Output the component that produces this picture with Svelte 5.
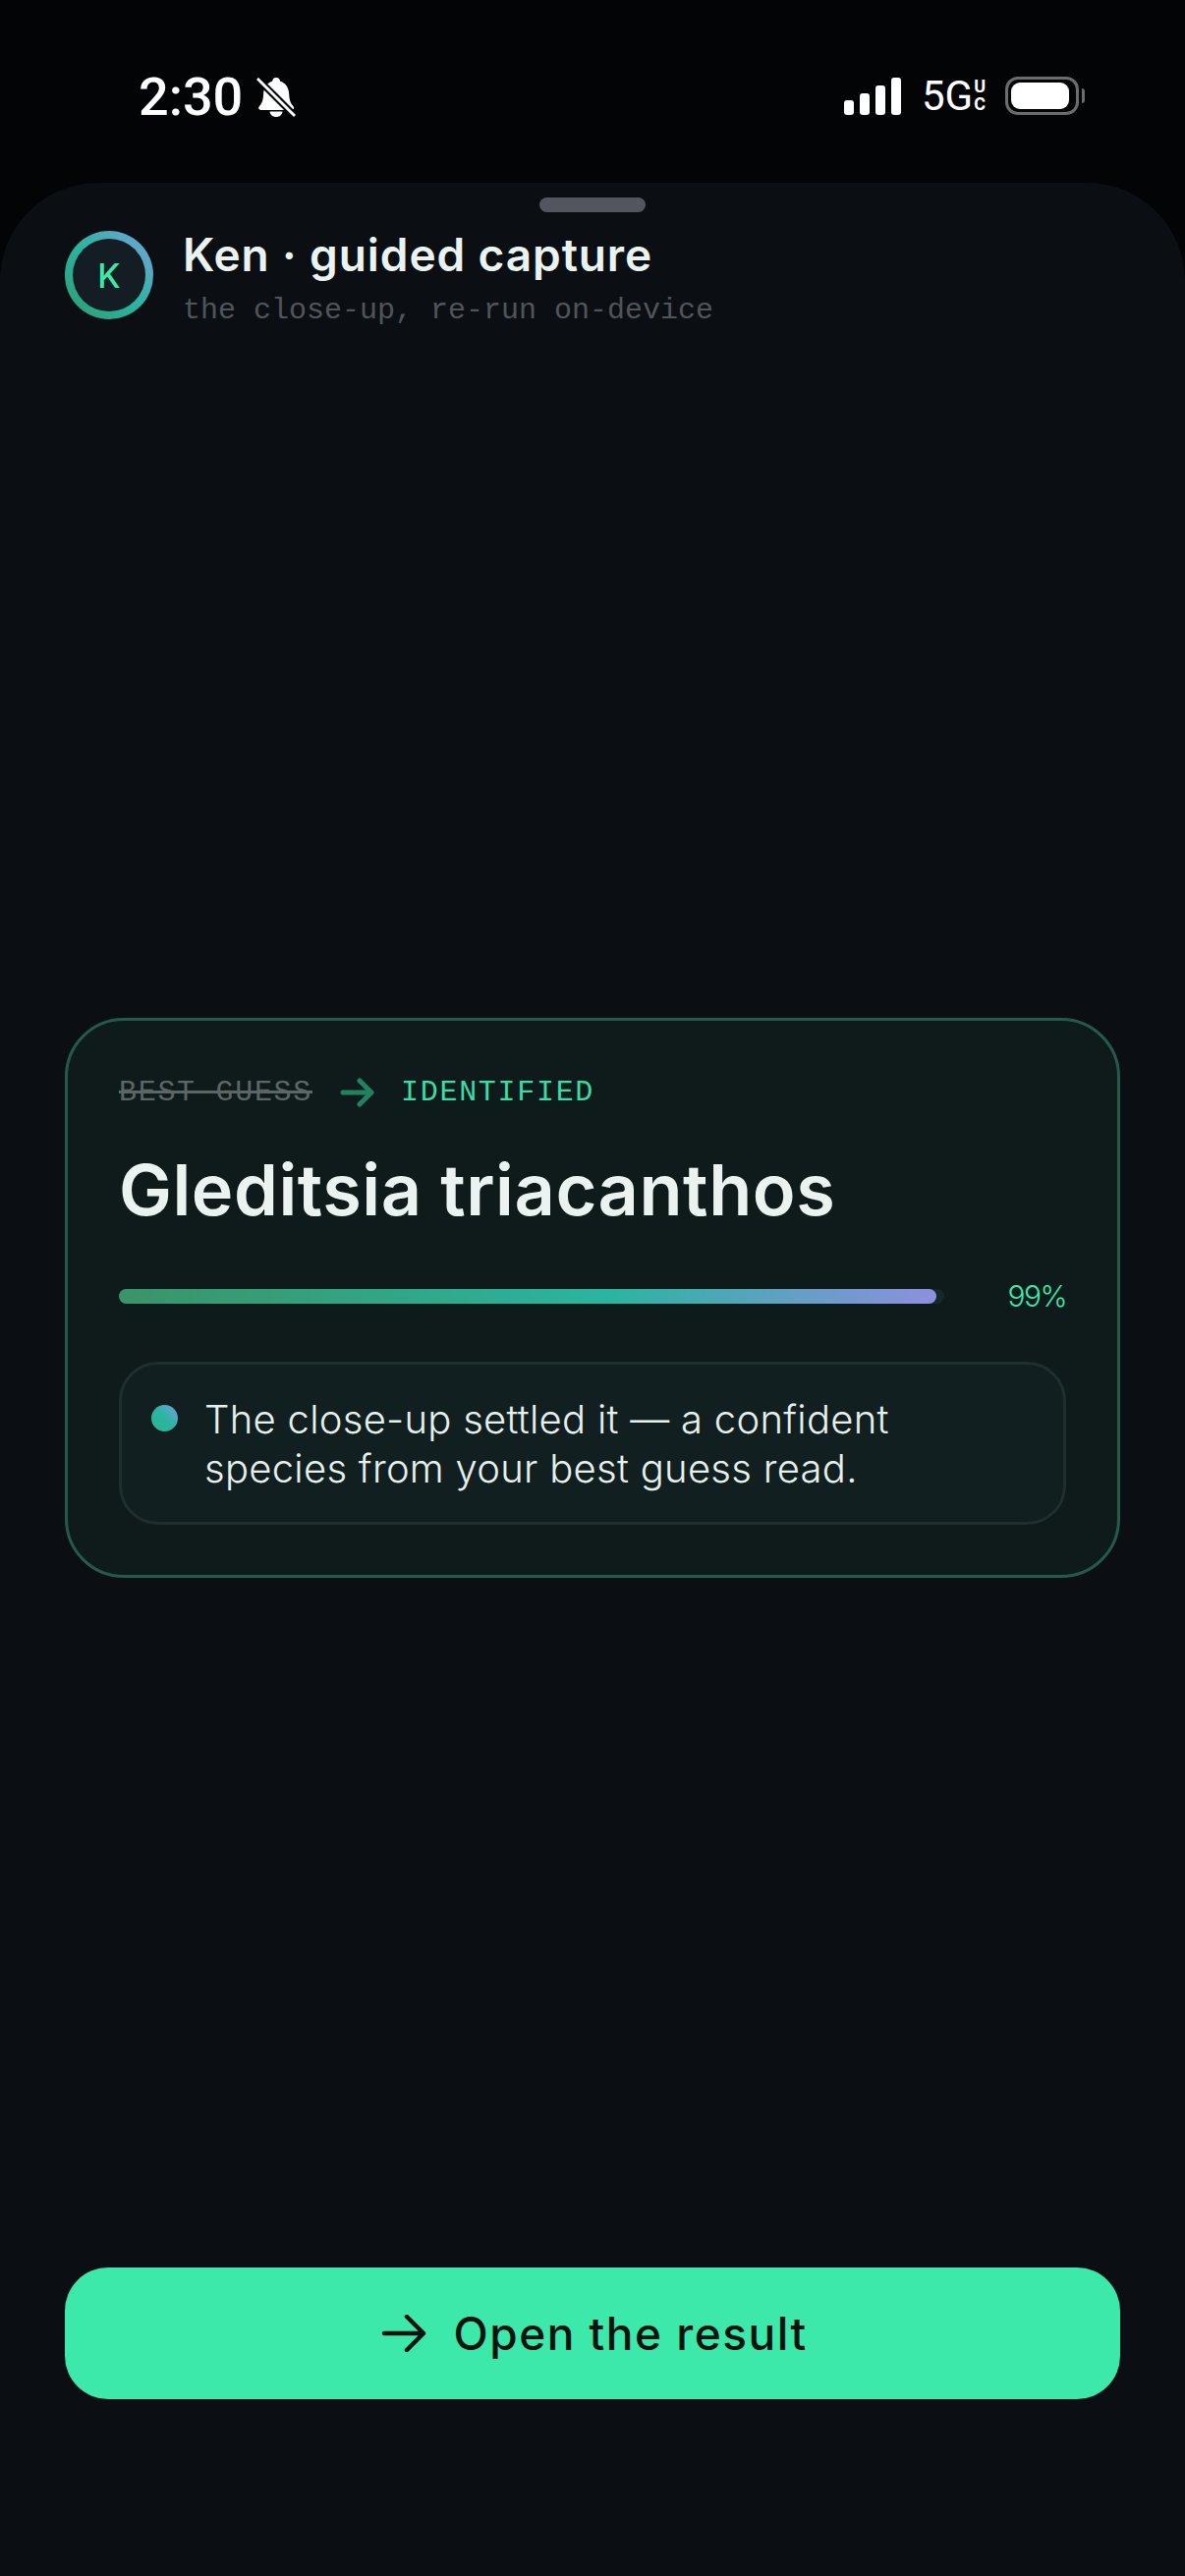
<script>
  let title = "Gleditsia triacanthos";
  let confidence = 99;
</script>

<div class="page">
  <div class="status">
    <div class="status-left">
      <span class="time">2:30</span>
      <svg class="bell" width="40" height="42" viewBox="0 0 40 42">
        <path d="M20 1c2.400 0 4 1.700 4.200 3.800 6 1.700 8.800 7 9 13.200.2 5.400 1.300 9 4.300 12.300 1.300 1.500.4 3.700-1.600 3.700H4.500c-2 0-3-2.200-1.600-3.700 2.900-3.200 4-6.900 4.200-12.300.2-6.200 3-11.500 9-13.200C16.300 2.700 17.600 1 20 1z" fill="#fff"/>
        <path d="M13.500 35.500h13c-.4 3.300-3 5.500-6.500 5.500s-6.100-2.200-6.500-5.500z" fill="#fff"/>
        <path d="M1 2l38 38" stroke="#020406" stroke-width="7"/>
        <path d="M1 2l38 38" stroke="#fff" stroke-width="3"/>
      </svg>
    </div>
    <div class="status-right">
      <svg width="58" height="38" viewBox="0 0 58 38" fill="#fff">
        <rect x="0" y="23" width="10" height="15" rx="3"/>
        <rect x="16" y="16" width="10" height="22" rx="3"/>
        <rect x="32" y="8" width="10" height="30" rx="3"/>
        <rect x="48" y="0" width="10" height="38" rx="3"/>
      </svg>
      <div class="net">
        <span class="fiveg">5G</span>
        <span class="uc"><span>U</span><span>C</span></span>
      </div>
      <div class="battery">
        <div class="battery-body"><div class="battery-fill"></div></div>
        <div class="battery-cap"></div>
      </div>
    </div>
  </div>

  <div class="sheet">
    <div class="handle"></div>
    <header>
      <div class="avatar"><div class="avatar-in">K</div></div>
      <div class="head-text">
        <h1>Ken · guided capture</h1>
        <p>the close-up, re-run on-device</p>
      </div>
    </header>

    <main>
      <section class="card">
        <div class="labels">
          <s>BEST GUESS</s>
          <svg width="36" height="30" viewBox="0 0 36 30" fill="none" stroke="#23815f" stroke-width="5" stroke-linecap="round" stroke-linejoin="round">
            <path d="M3 15h29M20 3l12 12-12 12"/>
          </svg>
          <span class="identified">IDENTIFIED</span>
        </div>
        <h2>{title}</h2>
        <div class="meter">
          <div class="track"><div class="fill" style="width: {confidence}%"></div></div>
          <span class="pct">{confidence}%</span>
        </div>
        <div class="note">
          <span class="dot"></span>
          <p>The close-up settled it — a confident species from your best guess read.</p>
        </div>
      </section>
    </main>

    <button>
      <svg width="46" height="38" viewBox="0 0 46 38" fill="none" stroke="#07130f" stroke-width="4.500" stroke-linecap="round" stroke-linejoin="round">
        <path d="M3 19h40M26 2l17 17-17 17"/>
      </svg>
      Open the result
    </button>
  </div>
</div>

<style>
  :global(body) {
    background: #020406;
  }
  .page {
    height: 2622px;
    display: flex;
    flex-direction: column;
    font-family: Inter, "Noto Sans", sans-serif;
    background: #020406;
  }
  .status {
    height: 186px;
    box-sizing: border-box;
    padding: 78px 102px 0 141px;
    display: flex;
    justify-content: space-between;
    align-items: flex-start;
    color: #fff;
  }
  .status-left {
    display: flex;
    align-items: center;
    gap: 14px;
  }
  .time {
    font-family: Roboto, sans-serif;
    font-weight: 500;
    font-size: 54px;
    line-height: 40px;
  }
  .status-right {
    display: flex;
    align-items: center;
    height: 39px;
  }
  .net {
    display: flex;
    margin-left: 21px;
    font-family: Roboto, sans-serif;
  }
  .fiveg {
    font-size: 42px;
    line-height: 38px;
  }
  .uc {
    display: flex;
    flex-direction: column;
    font-size: 18px;
    font-weight: 700;
    line-height: 18px;
    margin-left: 1px;
  }
  .battery {
    display: flex;
    align-items: center;
    margin-left: 20px;
  }
  .battery-body {
    width: 75px;
    height: 39px;
    box-sizing: border-box;
    border: 3px solid #6c6c6c;
    border-radius: 13px;
    padding: 3px 7px 3px 3px;
  }
  .battery-fill {
    height: 100%;
    background: #fff;
    border-radius: 9px;
  }
  .battery-cap {
    width: 3px;
    height: 15px;
    margin-left: 3px;
    background: #6c6c6c;
    border-radius: 0 3px 3px 0;
  }
  .sheet {
    flex: 1;
    display: flex;
    flex-direction: column;
    box-sizing: border-box;
    padding: 0 66px 180px;
    background: #0b0f14;
    border-radius: 100px 100px 0 0;
  }
  .handle {
    width: 108px;
    height: 15px;
    margin: 15px auto 0;
    border-radius: 8px;
    background: #53565e;
  }
  header {
    display: flex;
    align-items: flex-start;
    gap: 30px;
    margin-top: 19px;
  }
  .avatar {
    flex: none;
    width: 90px;
    height: 90px;
    box-sizing: border-box;
    padding: 8px;
    border-radius: 50%;
    background: linear-gradient(45deg, #2f9a72, #2bb5a0 50%, #7b9fdc);
  }
  .avatar-in {
    height: 100%;
    border-radius: 50%;
    background: #141c24;
    color: #3de8ab;
    display: flex;
    align-items: center;
    justify-content: center;
    font-size: 34px;
    font-weight: 500;
  }
  .head-text {
    margin-top: -3px;
  }
  h1 {
    margin: 0;
    font-size: 46px;
    font-weight: 600;
    line-height: 54px;
    letter-spacing: 0.900px;
    color: #eaf3ef;
  }
  .head-text p {
    margin: 12px 0 0;
    font-family: "Liberation Mono", monospace;
    font-size: 30px;
    line-height: 36px;
    color: #4f555a;
  }
  main {
    flex: 1;
    display: flex;
    flex-direction: column;
    justify-content: center;
  }
  .card {
    box-sizing: border-box;
    height: 570px;
    padding: 55px 52px 0;
    border: 3px solid #245a4a;
    border-radius: 60px;
    background: #0f1a1b;
  }
  .labels {
    display: flex;
    align-items: center;
    height: 36px;
    font-family: "Liberation Mono", monospace;
    font-size: 30px;
    letter-spacing: 1.700px;
    white-space: nowrap;
  }
  .labels svg {
    margin: 0 26px 0 28px;
  }
  s {
    color: #5c6667;
  }
  .identified {
    color: #3ddba5;
  }
  h2 {
    margin: 37px 0 0;
    font-size: 72px;
    font-weight: 600;
    line-height: 88px;
    letter-spacing: 0.550px;
    color: #eaf3ef;
  }
  .meter {
    display: flex;
    align-items: center;
    justify-content: space-between;
    margin-top: 44px;
    height: 40px;
  }
  .track {
    width: 840px;
    height: 15px;
    border-radius: 8px;
    background: #14292a;
  }
  .fill {
    height: 100%;
    border-radius: 8px;
    background: linear-gradient(90deg, #3a9468, #2ab5a0 60%, #8e8fe0);
  }
  .pct {
    font-size: 30px;
    font-weight: 300;
    letter-spacing: -1.600px;
    color: #3de8ab;
  }
  .note {
    display: flex;
    gap: 27px;
    align-items: flex-start;
    margin-top: 47px;
    height: 166px;
    box-sizing: border-box;
    padding: 31px 30px 0;
    border: 3px solid #1f2e2e;
    border-radius: 40px;
    background: #121f20;
  }
  .dot {
    flex: none;
    width: 27px;
    height: 27px;
    margin-top: 10px;
    border-radius: 50%;
    background: linear-gradient(45deg, #2bb58f, #2ab5a0 50%, #7b9fdc);
  }
  .note p {
    margin: 0;
    max-width: 760px;
    font-size: 40px;
    font-weight: 350;
    line-height: 50px;
    letter-spacing: 0.270px;
    color: #e6f0ec;
  }
  button {
    height: 134px;
    display: flex;
    align-items: center;
    justify-content: center;
    gap: 27px;
    padding: 0 0 0 4px;
    border: none;
    border-radius: 44px;
    background: #3de8ab;
    color: #07130f;
    font-family: inherit;
    font-size: 46px;
    font-weight: 500;
    letter-spacing: 1.500px;
  }
</style>
